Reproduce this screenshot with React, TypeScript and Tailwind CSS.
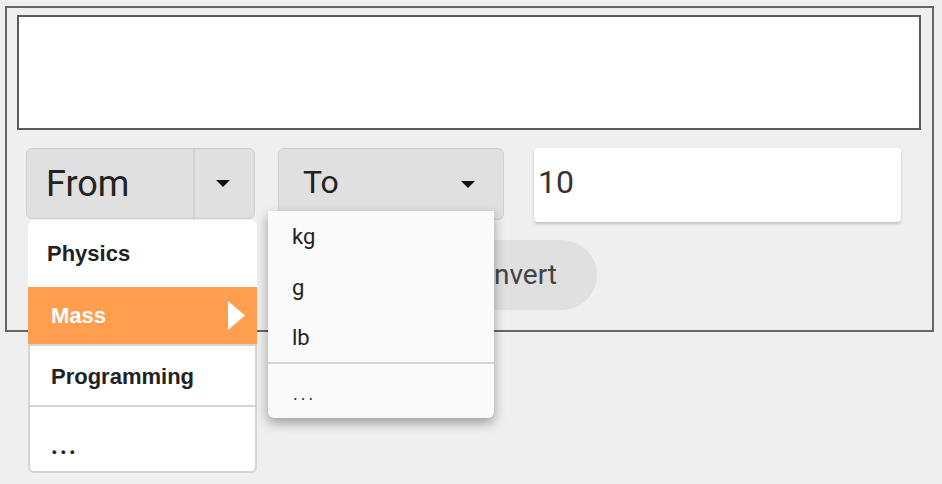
import React from "react";

function Caret() {
  return (
    <svg width="14" height="7" viewBox="0 0 14 7">
      <polygon points="0,0 14,0 7,7" fill="#111" />
    </svg>
  );
}

export default function App() {
  return (
    <div className="min-h-[484px] bg-[#efefef] pt-[6px] pl-[5px] font-['Roboto',sans-serif] text-[#222]">
      <div className="w-[929px] h-[326px] border-2 border-[#666] pt-[7px] pl-[10px] pr-[11px]">
        <div className="h-[115px] border-2 border-[#5a5a5a] bg-white" />
        <div className="mt-[18px] ml-[9px] flex items-start">
          {/* From */}
          <div className="relative z-10">
            <div className="w-[229px] h-[71px] rounded-[6px] border border-[#cfcfcf] bg-[#e0e0e0] flex">
              <div className="w-[166px] flex items-center pl-[19px] text-[36px] leading-none">From</div>
              <div className="flex-1 border-l-2 border-[#d2d2d2] flex items-center justify-center pr-[3px]">
                <Caret />
              </div>
            </div>
            <div className="absolute left-[2px] top-[72px] w-[229px] font-['Liberation_Sans',Arial,sans-serif] font-bold text-[22px] leading-none">
              <div className="h-[67px] bg-white rounded-t-[6px] flex items-center pl-[19px]">Physics</div>
              <div className="h-[57px] bg-[#ff9e4f] text-white flex items-center justify-between pl-[23px] pr-[12px]">
                <span>Mass</span>
                <svg width="17" height="29" viewBox="0 0 17 29">
                  <polygon points="0,0 17,14.5 0,29" fill="#fff" />
                </svg>
              </div>
              <div className="border-2 border-[#d4d4d4] rounded-b-[6px] bg-white">
                <div className="h-[61px] border-b-2 border-[#d4d4d4] flex items-center pl-[21px] pt-[2px]">Programming</div>
                <div className="h-[64px] flex items-center pl-[20px] pt-[6px] font-['Roboto',sans-serif] font-normal text-[34px]">...</div>
              </div>
            </div>
          </div>
          {/* To */}
          <div className="relative z-10 ml-[23px]">
            <div className="w-[226px] h-[72px] rounded-[6px] border border-[#cfcfcf] bg-[#e0e0e0] flex items-center justify-between pl-[24px] pr-[28px]">
              <span className="text-[32px] leading-none -mt-[5px]">To</span>
              <Caret />
            </div>
            <div className="absolute left-[-10px] top-[63px] w-[226px] bg-[#fafafa] rounded-b-[6px] shadow-[0_5px_12px_rgba(0,0,0,0.35)] text-[22px] leading-none">
              <div className="h-[52px] flex items-center pl-[24px]">kg</div>
              <div className="h-[50px] flex items-center pl-[24px]">g</div>
              <div className="h-[49px] flex items-center pl-[24px]">lb</div>
              <div className="h-[2px] bg-[#d4d4d4]" />
              <div className="h-[54px] flex items-center pl-[25px] pt-[6px] text-[18px] tracking-[3px] text-[#333]">...</div>
            </div>
          </div>
          {/* input */}
          <div className="ml-[30px] w-[367px] h-[74px] bg-white rounded-[4px] shadow-[0_2px_3px_rgba(0,0,0,0.2)] flex items-center pl-[4px] text-[32px] leading-none text-[#333]">
            <span className="-mt-[6px]">10</span>
          </div>
        </div>
        <div className="mt-[18px] ml-[403px] w-[177px] h-[70px] rounded-full bg-[#e0e0e0] flex items-center justify-end pr-[40px] text-[28px] leading-none text-[#444]">
          Convert
        </div>
      </div>
    </div>
  );
}
